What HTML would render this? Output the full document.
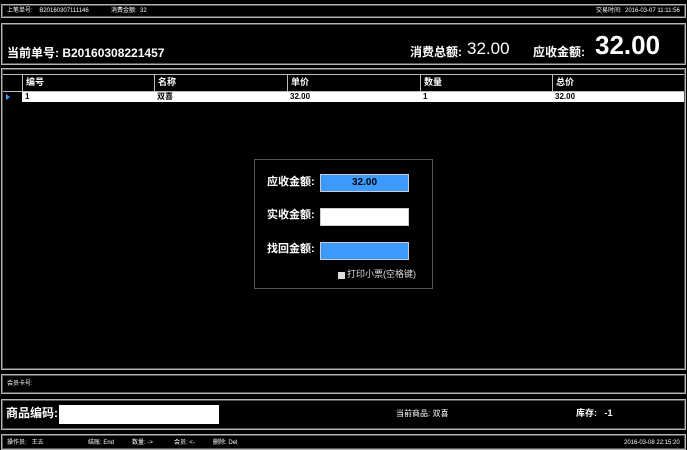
<!DOCTYPE html><html><head><meta charset="utf-8"><style>
*{margin:0;padding:0;box-sizing:border-box}
body{width:687px;height:450px;background:#000;position:relative;overflow:hidden;font-family:"Liberation Sans","Noto Sans CJK SC",sans-serif;color:#fff}
.p{position:absolute;left:1px;width:685px;border:1px solid #b4b4b4;box-shadow:inset 0 0 0 1px #555}
.a{position:absolute;white-space:nowrap;line-height:1}
.s{font-size:6px}
.b{font-weight:bold}
.c{position:absolute;top:75px;height:16px;border-left:1px solid #bbb;font-size:9px;line-height:10px;font-weight:bold;padding:2px 3px;color:#fff}
.r{position:absolute;top:93px;font-size:8px;line-height:8px;font-weight:bold;color:#000}
.inp{position:absolute;left:320px;width:89px;height:18px;border:1px solid #ccc}
</style></head><body>
<div class="p" style="top:4px;height:14px"></div>
<div class="a s" style="left:7px;top:8px">上笔单号: &nbsp;&nbsp; B20160307111146</div>
<div class="a s" style="left:111px;top:8px">消费金额: &nbsp;32</div>
<div class="a s" style="left:596px;top:8px">交易时间: &nbsp;2016-03-07 11:11:56</div>

<div class="p" style="top:23px;height:42px"></div>
<div class="a b" style="left:7px;top:47px;font-size:12px">当前单号: B20160308221457</div>
<div class="a b" style="left:410px;top:46px;font-size:12px">消费总额:</div>
<div class="a" style="left:467px;top:40px;font-size:17px">32.00</div>
<div class="a b" style="left:533px;top:46px;font-size:12px">应收金额:</div>
<div class="a b" style="left:595px;top:32px;font-size:26px">32.00</div>

<div class="p" style="top:68px;height:302px"></div>
<div class="a" style="left:3px;top:74px;width:681px;height:1px;background:#bbb"></div>
<div class="c" style="left:22px">编号</div>
<div class="c" style="left:154px">名称</div>
<div class="c" style="left:287px">单价</div>
<div class="c" style="left:420px">数量</div>
<div class="c" style="left:552px;width:132px">总价</div>
<div class="a" style="left:3px;top:91px;width:681px;height:1px;background:#bbb"></div>
<div class="a" style="left:3px;top:92px;width:19px;height:10px;background:#000"></div>
<div class="a" style="left:6px;top:94px;width:0;height:0;border-left:4px solid #3a9aff;border-top:3px solid transparent;border-bottom:3px solid transparent"></div>
<div class="a" style="left:22px;top:92px;width:662px;height:10px;background:#fff"></div>
<div class="r" style="left:25px">1</div>
<div class="r" style="left:157px">双喜</div>
<div class="r" style="left:290px">32.00</div>
<div class="r" style="left:423px">1</div>
<div class="r" style="left:555px">32.00</div>

<div class="a" style="left:254px;top:159px;width:179px;height:130px;border:1px solid #555"></div>
<div class="a b" style="left:267px;top:177px;font-size:11px">应收金额:</div>
<div class="inp" style="top:174px;background:#3a9aff;color:#000;font-size:10px;font-weight:bold;text-align:center;line-height:16px">32.00</div>
<div class="a b" style="left:267px;top:210px;font-size:11px">实收金额:</div>
<div class="inp" style="top:208px;background:#fff"></div>
<div class="a b" style="left:267px;top:244px;font-size:11px">找回金额:</div>
<div class="inp" style="top:242px;background:#3a9aff"></div>
<div class="a" style="left:338px;top:272px;width:7px;height:7px;background:#ddd"></div>
<div class="a" style="left:347px;top:270px;font-size:9px;color:#ddd">打印小票(空格键)</div>

<div class="p" style="top:374px;height:20px"></div>
<div class="a s" style="left:7px;top:381px">会员卡号:</div>
<div class="p" style="top:399px;height:31px"></div>
<div class="a b" style="left:6px;top:407px;font-size:12px">商品编码:</div>
<div class="a" style="left:59px;top:405px;width:160px;height:19px;background:#fff"></div>
<div class="a" style="left:396px;top:410px;font-size:8px">当前商品: 双喜</div>
<div class="a b" style="left:576px;top:409px;font-size:9px">库存: &nbsp;&nbsp;-1</div>
<div class="p" style="top:434px;height:16px"></div>
<div class="a s" style="left:7px;top:440px">操作员: &nbsp;&nbsp;王五</div>
<div class="a s" style="left:88px;top:440px">结账: End</div>
<div class="a s" style="left:132px;top:440px">数量: -&gt;</div>
<div class="a s" style="left:174px;top:440px">会员: &lt;-</div>
<div class="a s" style="left:213px;top:440px">删除: Del</div>
<div class="a s" style="left:624px;top:440px">2016-03-08 22:15:20</div>
</body></html>
